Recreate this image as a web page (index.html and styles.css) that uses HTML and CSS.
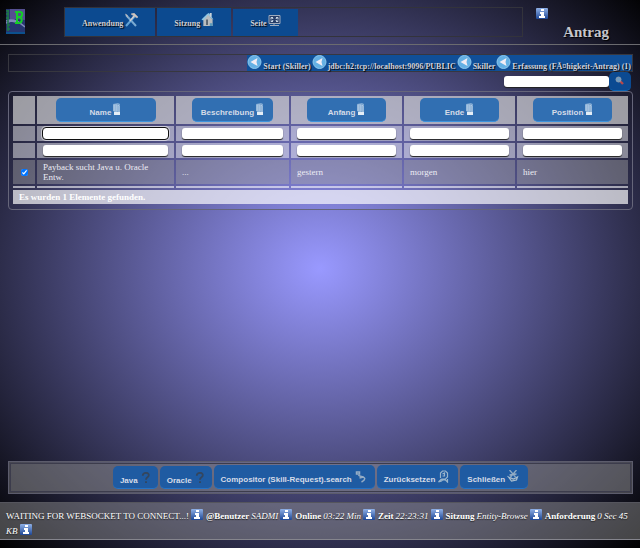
FILE: index.html
```html
<!DOCTYPE html>
<html lang="de">
<head>
<meta charset="utf-8">
<title>Antrag</title>
<link rel="stylesheet" href="styles.css">
</head>
<body>
<svg class="defs" aria-hidden="true">
  <defs>
    <linearGradient id="blue" x1="0" y1="0" x2="0" y2="1"><stop offset="0" stop-color="#8fb0e6"/><stop offset="1" stop-color="#1e4796"/></linearGradient>
    <symbol id="info" viewBox="0 0 12 11"><rect width="12" height="11" rx="1" fill="url(#blue)"/><path d="M5 1h3v2H5zM4 4h4v4h1v2H3V8h2V6H4z" fill="#fff"/></symbol>
    <symbol id="back" viewBox="0 0 14 14"><circle cx="7" cy="7" r="6.5" fill="#64b0e4" stroke="#8cc6ec"/><path d="M3 7l7-4-1 4 1 4z" fill="#f2ecf4"/></symbol>
    <symbol id="doc" viewBox="0 0 8 13"><path d="M0 1l5-1 2 1v8H2L0 8z" fill="#7fa8d2"/><path d="M1 2h3v6H1zM5 2l1 1v6M1 4h3M1 6h3" fill="none" stroke="#c0d6ec" stroke-width=".7"/><path d="M1 9h6v3H1z" fill="#e4edf6"/></symbol>
    <symbol id="help" viewBox="0 0 9 12"><path d="M1 4C1 0 8 0 7.500 3.500C7.500 6 4.500 5.500 4.500 8.500" fill="none" stroke="#34465e" stroke-width="2"/><path d="M3.500 10h2v2h-2z" fill="#34465e"/></symbol>
  </defs>
</svg>
<header class="top">
  <svg class="logo" viewBox="0 0 19 25" role="img" aria-label="Logo"><rect width="19" height="25" fill="#26356f"/><path d="M4 0h15v11L10 10 4 13z" fill="#554f91"/><path d="M0 12c8-3 13 1 19 6M0 14l5-2 5 1" fill="none" stroke="#7f8ab8" stroke-width="1.5"/><path d="M2 1v21M0 2h3M0 5h3M0 9h3M1 16h3M1 20h3" stroke="#1d7946" stroke-width="1.5"/><path d="M9 3h5c3 0 3 4 0 5h-2c5 0 5 6 0 6h-3M11 3v11" fill="none" stroke="#15cf27" stroke-width="2"/><path d="M0 23h19v2H0z" fill="#0c508e"/></svg>
  <nav class="menu">
    <button class="menu-item">Anwendung<svg class="i14" viewBox="0 0 14 14"><path d="M2 2l10 11" stroke="#79a9d1" stroke-width="2"/><path d="M11 3L2 13" stroke="#63a4d6" stroke-width="2"/><path d="M7 1l3-1 4 4-1 1-3-2zM1 1l2 1 1 3" fill="#d1c7bd" stroke="#b3b0b8" stroke-width=".6"/><path d="M10 3L6 8" stroke="#d2cdd0" stroke-width="1.5"/></svg></button>
    <button class="menu-item">Sitzung<svg class="i13" viewBox="0 0 13 14"><path d="M2 6l5-5 5 6v7H2z" fill="#b9bcbe"/><path d="M0 7l6-6 2-1 5 7-2-1-4-4-5 6z" fill="#8fc6e3"/><path d="M9 0h2v4H9z" fill="#c9d3d9"/><path d="M5 7h2v6H5z" fill="#58616d"/><path d="M9 11h3v3H9z" fill="#5c9aba"/></svg></button>
    <button class="menu-item low">Seite<svg class="i13" viewBox="0 0 13 12"><path d="M1 1h11v8H1zM6 9v2M2 11h9" fill="#263d68" stroke="#9eaabd"/><path d="M3 5V3h2M8 3h2v2M3 6v1h2M8 7h2V6M3 3l7 4M10 3L3 7" stroke="#c6d4e3" fill="none"/><path d="M5 4h3v2H5z" fill="#263d68"/></svg></button>
  </nav>
  <div class="title">
    <svg class="info"><use href="#info"/></svg>
    <h1>Antrag</h1>
  </div>
</header>
<main>
  <nav class="crumbs">
    <a href="#"><svg class="back"><use href="#back"/></svg>Start (Skiller)</a><a href="#"><svg class="back"><use href="#back"/></svg>jdbc:h2:tcp://localhost:9096/PUBLIC</a><a href="#"><svg class="back"><use href="#back"/></svg>Skiller</a><a href="#"><svg class="back"><use href="#back"/></svg>Erfassung (FÃ¤higkeit-Antrag) (1)</a>
  </nav>
  <form class="search">
    <input type="text" aria-label="Suche">
    <button type="button" aria-label="Suchen"><svg viewBox="0 0 10 10"><path d="M5 5l3 3" stroke="#b6484a" stroke-width="2.4"/><circle cx="3.5" cy="3.5" r="2.5" fill="#6f9bc2" stroke="#8b9cae"/></svg></button>
  </form>
  <section class="panel">
    <table>
      <colgroup><col class="c-check"><col class="c-name"><col class="c-desc"><col><col><col></colgroup>
      <thead>
        <tr><th></th>
          <th><button>Name<svg><use href="#doc"/></svg></button></th>
          <th><button>Beschreibung<svg><use href="#doc"/></svg></button></th>
          <th><button>Anfang<svg><use href="#doc"/></svg></button></th>
          <th><button>Ende<svg><use href="#doc"/></svg></button></th>
          <th><button>Position<svg><use href="#doc"/></svg></button></th></tr>
      </thead>
      <tbody>
        <tr class="filter"><td></td><td><input class="focused" type="text" aria-label="Name von"></td><td><input type="text" aria-label="Beschreibung von"></td><td><input type="text" aria-label="Anfang von"></td><td><input type="text" aria-label="Ende von"></td><td><input type="text" aria-label="Position von"></td></tr>
        <tr class="filter"><td></td><td><input type="text" aria-label="Name bis"></td><td><input type="text" aria-label="Beschreibung bis"></td><td><input type="text" aria-label="Anfang bis"></td><td><input type="text" aria-label="Ende bis"></td><td><input type="text" aria-label="Position bis"></td></tr>
        <tr class="data"><td><input type="checkbox" checked aria-label="Zeile auswählen"></td><td>Payback sucht Java u. Oracle Entw.</td><td>...</td><td>gestern</td><td>morgen</td><td>hier</td></tr>
        <tr class="thin"><td></td><td></td><td></td><td></td><td></td><td></td></tr>
      </tbody>
      <tfoot><tr><td colspan="6">Es wurden 1 Elemente gefunden.</td></tr></tfoot>
    </table>
  </section>
</main>
<div class="actions">
  <div class="actions-inner">
    <button class="small">Java<svg class="help"><use href="#help"/></svg></button>
    <button class="small">Oracle<svg class="help"><use href="#help"/></svg></button>
    <button>Compositor (Skill-Request).search<svg class="i11" viewBox="0 0 11 13"><path d="M2 2h3v2H2zM4 5c1 2 5 1 6 3s-1 3-3 4M5 8l4-1" fill="none" stroke="#96adc5" stroke-width="1.5"/></svg></button>
    <button>Zurücksetzen<svg class="i11" viewBox="0 0 11 13"><path d="M3 8V3l2-2h3l2 2v4L8 9H4M4 9l-3 3 3-1 1-1 3 0 2 2V9M5 4l2-1v3H5" fill="none" stroke="#9ab5cc" stroke-width="1.2"/></svg></button>
    <button>Schließen<svg class="i11" viewBox="0 0 11 13"><path d="M2 0l6 7M9 0L3 7M2 5l7-1" stroke="#91abc4" stroke-width="1.3"/><path d="M1 7l3 4 5-1 1-3-4 2z" fill="#3f6797" stroke="#a9bfd1" stroke-width="1.2"/></svg></button>
  </div>
</div>
<footer class="status">
  <span>WAITING FOR WEBSOCKET TO CONNECT...!<svg class="info"><use href="#info"/></svg></span>
  <span><b>@Benutzer</b> <i>SADMI</i> <svg class="info"><use href="#info"/></svg></span>
  <span><b>Online</b> <i>03:22 Min</i> <svg class="info"><use href="#info"/></svg></span>
  <span><b>Zeit</b> <i>22:23:31</i> <svg class="info"><use href="#info"/></svg></span>
  <span><b>Sitzung</b> <i>Entity-Browse</i> <svg class="info"><use href="#info"/></svg></span>
  <span><b>Anforderung</b> <i>0 Sec 45</i></span>
  <span><i>KB</i> <svg class="info"><use href="#info"/></svg></span>
</footer>
</body>
</html>
```
FILE: styles.css
```css
* { box-sizing: border-box; }
html { background: #000; }
body {
  margin: 0;
  min-height: 100vh;
  padding-bottom: 8px;
  display: flex;
  flex-direction: column;
  background: radial-gradient(ellipse at 50% 49%, #9999ff, #000);
  color: #fff;
  font: 9px/10px "Liberation Serif", serif;
}
svg { display: inline-block; flex: none; }
.defs { position: absolute; width: 0; height: 0; }
button { border: 0; margin: 0; color: #d6dce8; cursor: pointer; }
input[type=text] {
  display: block;
  width: 100%;
  height: 11px;
  border: 0;
  border-radius: 3px;
  background: #fff;
  box-shadow: 0 1px 1px #222;
  font: inherit;
  padding: 0 3px;
}
.info { width: 12px; height: 11px; }

.top {
  display: flex;
  height: 45px;
  padding: 7px 31px 0 6px;
  border-bottom: 1px solid #6b6b6f;
}
.logo { width: 19px; height: 25px; margin: 2px 39px 0 0; }
.menu {
  flex: 1;
  display: flex;
  align-items: flex-end;
  gap: 2px;
  height: 30px;
  border: 1px solid #33333b;
}
.menu-item {
  display: flex;
  align-items: center;
  height: 28px;
  padding: 3px 17px 0;
  background: #0c4a90;
  color: #cfcfd6;
  font: bold 8px/10px "Liberation Serif", serif;
  text-shadow: 1px 1px 1px #000;
}
.menu-item.low { height: 27px; }
.menu-item svg { margin: 0 0 8px 1px; }
.i14 { width: 14px; height: 14px; }
.i13 { width: 13px; height: 13px; }
.title { width: 73px; margin-left: 13px; }
.title .info { display: block; margin-top: 1px; }
.title h1 {
  margin: 4px 0 0;
  font-size: 15px;
  line-height: 18px;
  text-align: right;
  color: #c6c6cc;
  text-shadow: 1px 1px 1px #000;
}

main { flex: 1; padding: 9px 7px 0 8px; }
.crumbs {
  display: flex;
  justify-content: flex-end;
  height: 18px;
  border: 1px solid #37373f;
}
.crumbs a {
  display: flex;
  align-items: flex-end;
  padding-right: 1px;
  background: #104f98;
  color: #d2d2dc;
  font: bold 8px/9px "Liberation Serif", serif;
  text-decoration: none;
  text-shadow: 1px 1px 1px #000;
}
.back { width: 15px; height: 14px; margin: 0 1px 2px 0; }
.search {
  display: flex;
  justify-content: flex-end;
  height: 19px;
  padding-right: 2px;
}
.search input[type=text] { width: 105px; margin-top: 4px; }
.search button {
  width: 22px;
  height: 19px;
  padding: 0;
  border-radius: 5px;
  background: #0b4a92;
  border-bottom: 1px solid #0b64b4;
}
.search svg { width: 10px; height: 10px; }
.panel {
  padding: 2px 2px 3px;
  border: 1px solid #66667a;
  border-radius: 4px;
}
table { width: 100%; table-layout: fixed; border-spacing: 2px; }
.c-check { width: 22px; }
.c-name { width: 137px; }
.c-desc { width: 113px; }
th, td { padding: 0 6px; background: rgba(255, 255, 255, .58); text-align: left; }
th { height: 28px; text-align: center; background: rgba(215, 215, 215, .68); }
th button, .actions button {
  display: inline-flex;
  align-items: center;
  justify-content: center;
  border-radius: 5px;
  font: bold 8px/10px "Liberation Sans", sans-serif;
}
th button {
  width: 80%;
  height: 24px;
  padding: 6px 0 0;
  vertical-align: middle;
  background: #316fb2;
  border-bottom: 1px solid #3c92dc;
}
th svg { width: 8px; height: 13px; margin: 0 0 7px 2px; }
.filter td { height: 15px; background: rgba(255, 255, 255, .46); }
.filter .focused { outline: 1px solid #101010; box-shadow: 0 0 0 2px rgba(255, 255, 255, .5); }
.data td { height: 24px; background: rgba(170, 170, 170, .42); color: #ececf4; }
.data input { display: block; width: 7px; height: 7px; margin: 0 auto; }
.thin td { height: 2px; font-size: 0; line-height: 0; }
tfoot td { height: 14px; background: rgba(255, 255, 255, .68); font-weight: bold; }

.actions {
  margin: 0 7px 8px 8px;
  padding: 1px;
  border: 1px solid #5c5c6c;
  background: rgba(160, 160, 160, .35);
}
.actions-inner {
  display: flex;
  flex-wrap: wrap;
  justify-content: center;
  align-items: flex-end;
  gap: 2px;
  padding: 1px 2px 2px;
  border: 1px solid #3c3c4c;
  background: rgba(130, 130, 130, .25);
}
.actions button {
  height: 24px;
  padding: 7px 9px 0 7px;
  background: #1f5ba2;
  border-bottom: 1px solid #2474c8;
}
.actions button.small { height: 23px; padding: 7px 7px 0; }
.help { width: 10px; height: 11px; margin: 0 0 7px 3px; }
.i11 { width: 12px; height: 13px; margin: 0 0 8px 2px; }

.status {
  padding: 6px 4px 0 6px;
  border-top: 1px solid #55555d;
  border-bottom: 1px solid #85858d;
  background: rgba(150, 150, 150, .45);
  display: flex;
  flex-wrap: wrap;
  column-gap: 3px;
  line-height: 15px;
  text-shadow: 0 1px 1px #222;
}
.status span { display: flex; align-items: center; gap: 2px; height: 15px; white-space: nowrap; }
.status .info { margin-bottom: 5px; }
```
